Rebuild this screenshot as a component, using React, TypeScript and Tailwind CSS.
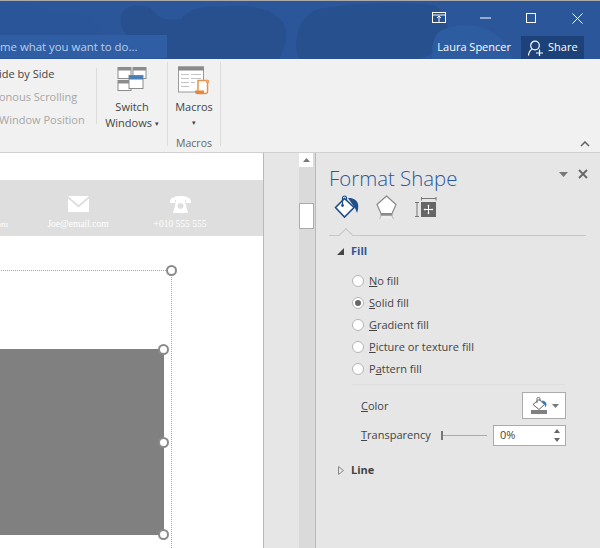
import React from 'react';

const font = "font-['Open_Sans','Noto_Sans',sans-serif]";

const Handle = ({ className }: { className: string }) => (
  <span className={`absolute w-[11px] h-[11px] rounded-full bg-white border-2 border-[#8a8a8a] ${className}`} />
);

const RibbonSep = ({ className = '' }: { className?: string }) => <div className={`w-px bg-[#dcdcdc] ${className}`} />;

const TitleTexture = () => (
  <svg width="600" height="59" viewBox="0 0 600 59" className="absolute left-0 top-0">
    <rect x="0" y="0" width="600" height="59" fill="#2b579a" />
    <path d="M125 8c8-5 22-5 28 2 6 8 14 10 28 8 6-8 20-14 40-12 30-3 50 2 56 10 8 4 12 14 8 28l-6 15H170c-14-2-24-8-28-18-8 0-16-6-20-14-3-8-1-15 3-19z" fill="#284f8e" />
    <path d="M318 8c30-6 80-8 117-4 12 10 18 26 8 38-6 9-20 17-34 17H300c-6-10-4-22 0-34 3-8 10-14 18-17z" fill="#27508f" />
    <path d="M0 6c18-3 42 0 52 6 20 0 40 2 50 12v35H0z" fill="#2a5599" />
    <path d="M440 30c16-8 34-8 50 0 14 8 20 18 22 29h-80c0-12 0-22 8-29z" fill="#2e5ca1" />
  </svg>
);

const SwitchIcon = () => (
  <svg width="30" height="26" viewBox="0 0 30 26" fill="none">
    <rect x="1" y="1.5" width="13" height="11" fill="#fff" stroke="#8c8c8c" />
    <rect x="1" y="1.5" width="13" height="3" fill="#8c8c8c" />
    <rect x="16" y="1.5" width="13" height="11" fill="#fff" stroke="#8c8c8c" />
    <rect x="16" y="1.5" width="13" height="3" fill="#8c8c8c" />
    <rect x="1" y="14.5" width="13" height="10" fill="#fff" stroke="#8c8c8c" />
    <rect x="1" y="14.5" width="13" height="3" fill="#8c8c8c" />
    <rect x="12" y="9.5" width="14" height="13" fill="#fff" stroke="#8c8c8c" />
    <rect x="12" y="9.5" width="14" height="4" fill="#4a7fb5" />
  </svg>
);

const MacroIcon = () => (
  <svg width="32" height="29" viewBox="0 0 32 29" fill="none">
    <rect x="0.5" y="1" width="25" height="25" fill="#fff" stroke="#9a9a9a" />
    <rect x="0" y="0.5" width="26" height="4" fill="#8a8a8a" />
    <path d="M3 8.500h8M13 8.500h10M3 12.500h8M13 12.500h10M3 16.500h8M13 16.500h4M3 20.500h8" stroke="#c4c4c4" />
    <path d="M20 14.500h9.500v11a2 2 0 0 1-2 2H20z" fill="#fff" stroke="#e8924a" strokeWidth="1.500" />
    <path d="M17 24.500h9v3.500h-7.500a2 2 0 0 1-1.500-2z" fill="#e8853a" />
    <path d="M28 14h3v3h-3z" fill="#e8a26a" />
  </svg>
);

const BucketIcon = () => (
  <svg width="26" height="25" viewBox="0 0 26 25" fill="none">
    <path d="M10.500 3.500 L20 12.500 L10.500 22 L1.500 12.500 Z" fill="#fff" stroke="#1f4e8c" strokeWidth="1.600" />
    <path d="M8.500 10V3a2 2 0 0 1 4 0v3" stroke="#1f4e8c" strokeWidth="1.200" />
    <circle cx="8.500" cy="10.500" r="1.400" fill="#1f4e8c" />
    <path d="M14 3c5-.5 9 2 10 6 .6 3 .2 6-1 9-.8-2.500-1.800-5-3.500-7z" fill="#1f4e8c" />
  </svg>
);

const PentagonIcon = () => (
  <svg width="22" height="25" viewBox="0 0 22 25" fill="none">
    <path d="M10.500 1 L20 9.500 L16 18.500 H5 L1 9.500 Z" fill="#fff" stroke="#8a8a8a" strokeWidth="1.200" strokeLinejoin="round" />
    <path d="M5 21h11l1 3H4z" fill="#ececec" />
    <path d="M4.500 19.800h12" stroke="#8a8a8a" strokeWidth="1.800" />
    <path d="M5 21l-1.500 3M16 21l1.500 3" stroke="#c4c4c4" strokeWidth="1.200" />
  </svg>
);

const SizeIcon = () => (
  <svg width="22" height="22" viewBox="0 0 22 22" fill="none">
    <path d="M6.500 2.500h14.500M6.500 1v3.500M21 1v3.500" stroke="#777" />
    <path d="M0 6.500h4M2 6.500v14M0 20.500h4" stroke="#777" />
    <rect x="6" y="6" width="15" height="15" fill="#666" />
    <path d="M13.500 10v7M10 13.500h7" stroke="#fff" />
    <path d="M12.300 10.200l1.200-1.700 1.200 1.700zM12.300 16.800l1.200 1.700 1.200-1.700zM10.200 12.300l-1.700 1.200 1.700 1.200zM16.800 12.300l1.700 1.200-1.700 1.200z" fill="#fff" />
  </svg>
);

const Radio = ({ checked, label }: { checked?: boolean; label: React.ReactNode }) => (
  <div className="flex items-center h-[22px] gap-[5px]">
    <span className="w-[12px] h-[12px] rounded-full bg-white border border-[#b4b4b4] flex items-center justify-center">
      {checked && <span className="w-[6px] h-[6px] rounded-full bg-[#666]" />}
    </span>
    <span>{label}</span>
  </div>
);

export default function App() {
  return (
    <div className={`w-[600px] h-[548px] overflow-hidden flex flex-col bg-[#e6e6e6] text-[#444] text-[11px] ${font}`}>
      {/* title bar */}
      <div className="h-[59px] shrink-0 border-t border-[#a9a9a9] flex flex-col relative overflow-hidden">
        <TitleTexture />
        <div className="relative flex justify-end items-center h-[35px] text-white">
          <svg width="14" height="12" viewBox="0 0 14 12" fill="none" className="mr-[34px] mt-[-1px]">
            <rect x="0.500" y="0.500" width="13" height="10" stroke="#fff" />
            <path d="M0.500 3h13M7 10V4.500M5 6l2-2 2 2" stroke="#fff" />
          </svg>
          <svg width="11" height="2" viewBox="0 0 11 2" className="mr-[35px] mt-[-1px]"><path d="M0 1h11" stroke="#fff" /></svg>
          <svg width="10" height="10" viewBox="0 0 10 10" fill="none" className="mr-[36px] mt-[-1px]"><rect x="0.500" y="0.500" width="9" height="9" stroke="#fff" /></svg>
          <svg width="11" height="11" viewBox="0 0 11 11" fill="none" className="mr-[17px] mt-[-1px]"><path d="M0.500 0.500l10 10M10.500 0.500l-10 10" stroke="#fff" /></svg>
        </div>
        <div className="relative flex items-center h-[23px] text-white">
          <div className="w-[167px] h-[23px] mt-[-2px] bg-[#2f5ea5] text-[#bccfe9] text-[11.400px] leading-[23px] whitespace-nowrap overflow-hidden">me what you want to do...</div>
          <div className="flex-1" />
          <span className="mr-[10px]">Laura Spencer</span>
          <div className="w-[63px] h-[23px] bg-[#1c4279] flex items-center mr-[16px] pl-[7px] gap-[5px]">
            <svg width="15" height="16" viewBox="0 0 15 16" fill="none">
              <circle cx="7" cy="5.500" r="4.300" stroke="#fff" strokeWidth="1.200" />
              <path d="M0.500 15.500c0-3 1.500-5 3.500-6.500M8 13h7M11.500 9.500v6.500" stroke="#fff" strokeWidth="1.200" />
            </svg>
            <span>Share</span>
          </div>
        </div>
      </div>

      {/* ribbon */}
      <div className="h-[94px] shrink-0 bg-[#f1f1f1] border-b border-[#d0d0d0] flex relative">
        <div className="w-[96px] pt-[5px] whitespace-nowrap overflow-hidden">
          <div className="h-[23px] leading-[20px] -ml-[1px]">ide by Side</div>
          <div className="h-[23px] leading-[20px] text-[#a6a6a6] -ml-[1px]">onous Scrolling</div>
          <div className="h-[23px] leading-[20px] text-[#a6a6a6] -ml-[1px]">Window Position</div>
        </div>
        <RibbonSep className="h-[56px] mt-[9px]" />
        <div className="w-[70px] flex flex-col items-center pt-[7px] leading-[16px]">
          <SwitchIcon />
          <div className="mt-[7px]">Switch</div>
          <div className="whitespace-nowrap">Windows <span className="text-[7px] align-middle">▾</span></div>
        </div>
        <RibbonSep className="h-[84px] mt-[3px]" />
        <div className="w-[52px] flex flex-col items-center pt-[7px] leading-[16px]">
          <MacroIcon />
          <div className="mt-[4px]">Macros</div>
          <div className="text-[7px]">▾</div>
          <div className="mt-[4px] text-[#666] text-[10.500px]">Macros</div>
        </div>
        <RibbonSep className="h-[84px] mt-[3px]" />
        <svg width="10" height="6" viewBox="0 0 10 6" fill="none" className="absolute right-[10px] bottom-[5px]"><path d="M1 5l4-4 4 4" stroke="#666" strokeWidth="1.600" /></svg>
      </div>

      {/* body */}
      <div className="flex-1 flex min-h-0">
        <div className="w-[264px] h-full bg-white border-r border-[#b9b9b9] relative overflow-hidden shrink-0">
          <div className="mt-[27px] h-[56px] bg-[#dedede]" />
          <span className="absolute right-[255px] top-[65px] leading-[12px] text-white text-[9px] font-['Liberation_Serif',serif]">.com</span>
          <div className="absolute left-[48px] top-[43px] w-[60px] flex flex-col items-center text-white font-['Liberation_Serif',serif] text-[9.500px] whitespace-nowrap">
            <svg width="21" height="16" viewBox="0 0 21 16" fill="#fff"><path d="M0 0h21L10.500 9zM0 2.500v13.500h21V2.500L10.500 11.500z" /></svg>
            <div className="mt-[6px] leading-[12px]">Joe@email.com</div>
          </div>
          <div className="absolute left-[150px] top-[43px] w-[60px] flex flex-col items-center text-white font-['Liberation_Serif',serif] text-[9.500px] whitespace-nowrap">
            <svg width="21" height="17" viewBox="0 0 21 17" fill="#fff"><path d="M0 5c0-3 5-5 10.500-5S21 2 21 5v2h-5V4H5v3H0zM6 4h9l1 6 2 7H3l2-7zM10.500 7a3 3 0 1 0 .01 0z" /></svg>
            <div className="mt-[5px] leading-[12px]">+010 555 555</div>
          </div>
          {/* selection */}
          <div className="absolute left-[-20px] top-[117px] w-[192px] h-[400px] border-t border-r border-dotted border-[#a8a8a8]" />
          <div className="absolute left-0 top-[196px] w-[164px] h-[186px] bg-[#808080]" />
          <Handle className="left-[166px] top-[112px]" />
          <Handle className="left-[158px] top-[191px]" />
          <Handle className="left-[158px] top-[284px]" />
          <Handle className="left-[158px] top-[376px]" />
        </div>
        <div className="w-[35px] shrink-0" />
        {/* scrollbar */}
        <div className="w-[17px] bg-[#dadada] border-r border-[#b9b9b9] shrink-0">
          <div className="w-[14px] h-[14px] bg-white flex items-center justify-center">
            <svg width="7" height="4" viewBox="0 0 7 4"><path d="M0 4l3.500-4 3.500 4z" fill="#777" /></svg>
          </div>
          <div className="w-[15px] h-[26px] mt-[36px] bg-white border border-[#ababab]" />
        </div>
        {/* pane */}
        <div className="flex-1 relative pl-[13px]">
          <div className="absolute right-[12px] top-[16px] flex items-center gap-[10px]">
            <svg width="9" height="5" viewBox="0 0 9 5"><path d="M0 0h9L4.500 5z" fill="#777" /></svg>
            <svg width="10" height="10" viewBox="0 0 10 10" fill="none"><path d="M1 1l8 8M9 1l-8 8" stroke="#666" strokeWidth="1.800" /></svg>
          </div>
          <div className="text-[20.400px] leading-[28px] mt-[11px] text-[#2b579a] font-light">Format Shape</div>
          <div className="flex items-start h-[38px] pl-[5px] mt-[3px]">
            <BucketIcon />
            <div className="ml-[16px]"><PentagonIcon /></div>
            <div className="ml-[17px] mt-[1px]"><SizeIcon /></div>
          </div>
          <div className="relative w-[257px] h-px bg-[#c6c6c6] mt-[2px]">
            <div className="absolute left-[12px] -top-[5px] w-[10px] h-[10px] rotate-45 bg-[#e6e6e6] border-l border-t border-[#c6c6c6]" />
          </div>
          <div className="flex items-center mt-[7px] h-[16px]">
            <svg width="7" height="7" viewBox="0 0 7 7" className="ml-[8px]"><path d="M7 0v7H0z" fill="#444" /></svg>
            <span className="ml-[7px] font-bold text-[#2b579a]">Fill</span>
          </div>
          <div className="pl-[23px] mt-[11px]">
            <Radio label={<><u>N</u>o fill</>} />
            <Radio checked label={<><u>S</u>olid fill</>} />
            <Radio label={<><u>G</u>radient fill</>} />
            <Radio label={<><u>P</u>icture or texture fill</>} />
            <Radio label={<>P<u>a</u>ttern fill</>} />
          </div>
          <div className="ml-[23px] w-[213px] h-px bg-[#dedede] mt-[4px]" />
          <div className="flex items-center mt-[8px] pl-[32px] h-[26px] relative">
            <span><u>C</u>olor</span>
            <div className="absolute left-[193px] -top-[1px] w-[44px] h-[27px] bg-white border border-[#ababab] flex items-center pl-[8px] gap-[5px]">
              <svg width="16" height="17" viewBox="0 0 16 17" fill="none">
                <path d="M8 2.500l5.500 5-5.500 5-6-5z" fill="#fff" stroke="#666" />
                <path d="M6 6V1.500a1.500 1 0 0 1 3 0V4" stroke="#666" />
                <path d="M10.500 3.500c3 0 4.500 1.500 5 3.500 0 1.500-.5 2.500-1 3.500-.4-2-1-3.500-2-4z" fill="#2b7cd3" />
                <rect x="0" y="13" width="16" height="4" fill="#808080" />
              </svg>
              <svg width="7" height="4" viewBox="0 0 7 4"><path d="M0 0h7L3.500 4z" fill="#777" /></svg>
            </div>
          </div>
          <div className="flex items-center mt-[6px] pl-[32px] h-[21px] relative">
            <span><u>T</u>ransparency</span>
            <div className="absolute left-[112px] top-[10px] w-[46px] h-px bg-[#ababab]" />
            <div className="absolute left-[112px] top-[6px] w-[2px] h-[9px] bg-[#777]" />
            <div className="absolute left-[164px] top-0 w-[73px] h-[21px] bg-white border border-[#ababab] flex items-center pl-[6px]">
              <span>0%</span>
              <div className="absolute right-[5px] top-[3px] flex flex-col gap-[5px]">
                <svg width="6" height="4" viewBox="0 0 6 4" className="block"><path d="M0 4l3-4 3 4z" fill="#666" /></svg>
                <svg width="6" height="4" viewBox="0 0 6 4" className="block"><path d="M0 0h6L3 4z" fill="#666" /></svg>
              </div>
            </div>
          </div>
          <div className="flex items-center mt-[16px] h-[16px]">
            <svg width="6" height="9" viewBox="0 0 6 9" fill="none" className="ml-[9px]"><path d="M0.500 0.500l5 4-5 4z" stroke="#888" fill="none" /></svg>
            <span className="ml-[7px] font-bold">Line</span>
          </div>
        </div>
      </div>
    </div>
  );
}
